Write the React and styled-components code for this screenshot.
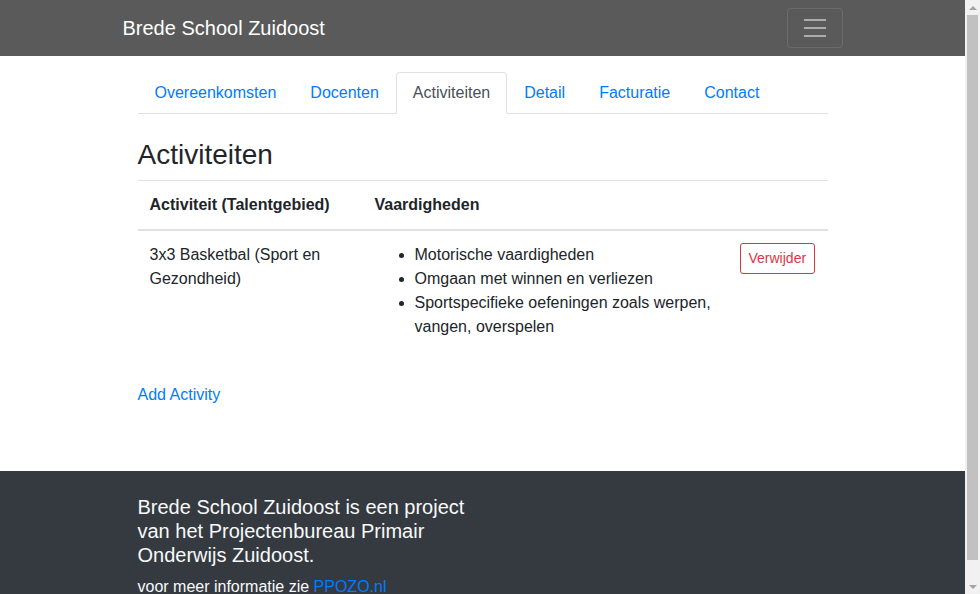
import React from "react";
import styled, { createGlobalStyle } from "styled-components";

const Global = createGlobalStyle`
  html, body { margin: 0; padding: 0; }
  body {
    font-family: "Liberation Sans", Arial, Helvetica, sans-serif;
    font-size: 16px;
    line-height: 1.5;
    color: #212529;
    background: #fff;
    margin-right: 15px;
  }
  * { box-sizing: border-box; }
`;

const Scrollbar = styled.div`
  position: fixed;
  top: 0;
  right: 0;
  width: 15px;
  height: 100vh;
  background: #f1f1f1;
  display: flex;
  flex-direction: column;
  z-index: 10;
`;

const ScrollArrow = styled.div`
  height: 15px;
  display: flex;
  align-items: center;
  justify-content: center;
  flex: none;
`;

const ScrollTrack = styled.div`
  flex: 1;
  padding: 0 2px 19px;
  display: flex;
  flex-direction: column;
`;

const ScrollThumb = styled.div`
  flex: 1;
  background: #c1c1c1;
`;

const Navbar = styled.nav`
  background: #5a5a5a;
  height: 56px;
  display: flex;
  align-items: center;
`;

const Container = styled.div`
  width: 720px;
  margin: 0 auto;
  padding: 0 ${(p) => (p.$flush ? 0 : 15)}px;
  display: ${(p) => (p.$flex ? "flex" : "block")};
  align-items: center;
  justify-content: space-between;
`;

const Brand = styled.a`
  color: #fff;
  font-size: 20px;
  line-height: 30px;
  text-decoration: none;
`;

const Toggler = styled.button`
  width: 56px;
  height: 40px;
  padding: 4px 12px;
  border: 1px solid rgba(255, 255, 255, 0.1);
  border-radius: 4px;
  background: transparent;
  display: flex;
  align-items: center;
  justify-content: center;
`;

const Main = styled.main`
  padding-top: 16px;
  padding-bottom: 64px;
`;

const Tabs = styled.ul`
  display: flex;
  list-style: none;
  margin: 0;
  padding: 0;
  border-bottom: 1px solid #dee2e6;
`;

const Tab = styled.li`
  margin-bottom: -1px;
`;

const TabLink = styled.a`
  display: block;
  padding: 8px 16px;
  border: 1px solid transparent;
  border-color: ${(p) => (p.$active ? "#dee2e6 #dee2e6 #fff" : "transparent")};
  border-top-left-radius: 4px;
  border-top-right-radius: 4px;
  color: ${(p) => (p.$active ? "#495057" : "#007bff")};
  background: ${(p) => (p.$active ? "#fff" : "transparent")};
  text-decoration: none;
  line-height: 24px;
`;

const Heading = styled.h3`
  font-size: 28px;
  font-weight: 500;
  line-height: 1.2;
  margin: 24px 0 8px;
`;

const Table = styled.table`
  width: 100%;
  border-collapse: collapse;
  margin-bottom: 16px;
`;

const Th = styled.th`
  text-align: left;
  font-weight: 700;
  padding: 12px;
  vertical-align: bottom;
  border-top: 1px solid #dee2e6;
  border-bottom: 2px solid #dee2e6;
  width: ${(p) => p.$w || "auto"};
`;

const Td = styled.td`
  padding: 12px;
  vertical-align: top;
  border-top: 1px solid #dee2e6;
`;

const List = styled.ul`
  margin: 0 0 16px;
  padding-left: 40px;
`;

const DangerButton = styled.button`
  font-family: inherit;
  font-size: 14px;
  line-height: 21px;
  padding: 4px 8px;
  color: #dc3545;
  background: transparent;
  border: 1px solid #dc3545;
  border-radius: 3px;
`;

const Link = styled.a`
  color: #007bff;
  text-decoration: none;
`;

const Footer = styled.footer`
  background: #343a40;
  color: #f8f9fa;
  padding: 24px 0 40px;
`;

const FooterCol = styled.div`
  width: 330px;
`;

const FooterTitle = styled.h5`
  font-size: 20px;
  font-weight: 500;
  line-height: 1.2;
  margin: 0 0 8px;
`;

const FooterText = styled.p`
  margin: 0 0 16px;
`;

const TogglerIcon = () => (
  <svg width="30" height="30" viewBox="0 0 30 30">
    <path
      stroke="rgba(255,255,255,0.5)"
      strokeWidth="2"
      strokeLinecap="butt"
      d="M4 7h22M4 15h22M4 23h22"
    />
  </svg>
);

const Arrow = ({ down }) => (
  <svg width="8" height="4" viewBox="0 0 8 4">
    <path fill="#a3a3a3" d={down ? "M0 0h8L4 4z" : "M4 0l4 4H0z"} />
  </svg>
);

const tabs = ["Overeenkomsten", "Docenten", "Activiteiten", "Detail", "Facturatie", "Contact"];

export default function App() {
  return (
    <>
      <Global />
      <Scrollbar aria-hidden="true">
        <ScrollArrow>
          <Arrow />
        </ScrollArrow>
        <ScrollTrack>
          <ScrollThumb />
        </ScrollTrack>
        <ScrollArrow>
          <Arrow down />
        </ScrollArrow>
      </Scrollbar>
      <Navbar>
        <Container $flush $flex>
          <Brand href="#">Brede School Zuidoost</Brand>
          <Toggler aria-label="menu">
            <TogglerIcon />
          </Toggler>
        </Container>
      </Navbar>
      <Main>
        <Container>
          <Tabs>
            {tabs.map((t) => (
              <Tab key={t}>
                <TabLink href="#" $active={t === "Activiteiten"}>
                  {t}
                </TabLink>
              </Tab>
            ))}
          </Tabs>
          <Heading>Activiteiten</Heading>
          <Table>
            <thead>
              <tr>
                <Th $w="225px">Activiteit (Talentgebied)</Th>
                <Th $w="365px">Vaardigheden</Th>
                <Th />
              </tr>
            </thead>
            <tbody>
              <tr>
                <Td>3x3 Basketbal (Sport en Gezondheid)</Td>
                <Td>
                  <List>
                    <li>Motorische vaardigheden</li>
                    <li>Omgaan met winnen en verliezen</li>
                    <li>Sportspecifieke oefeningen zoals werpen, vangen, overspelen</li>
                  </List>
                </Td>
                <Td>
                  <DangerButton>Verwijder</DangerButton>
                </Td>
              </tr>
            </tbody>
          </Table>
          <Link href="#">Add Activity</Link>
        </Container>
      </Main>
      <Footer>
        <Container>
          <FooterCol>
            <FooterTitle>
              Brede School Zuidoost is een project van het Projectenbureau Primair Onderwijs Zuidoost.
            </FooterTitle>
            <FooterText>
              voor meer informatie zie <Link href="#">PPOZO.nl</Link>
            </FooterText>
          </FooterCol>
        </Container>
      </Footer>
    </>
  );
}
